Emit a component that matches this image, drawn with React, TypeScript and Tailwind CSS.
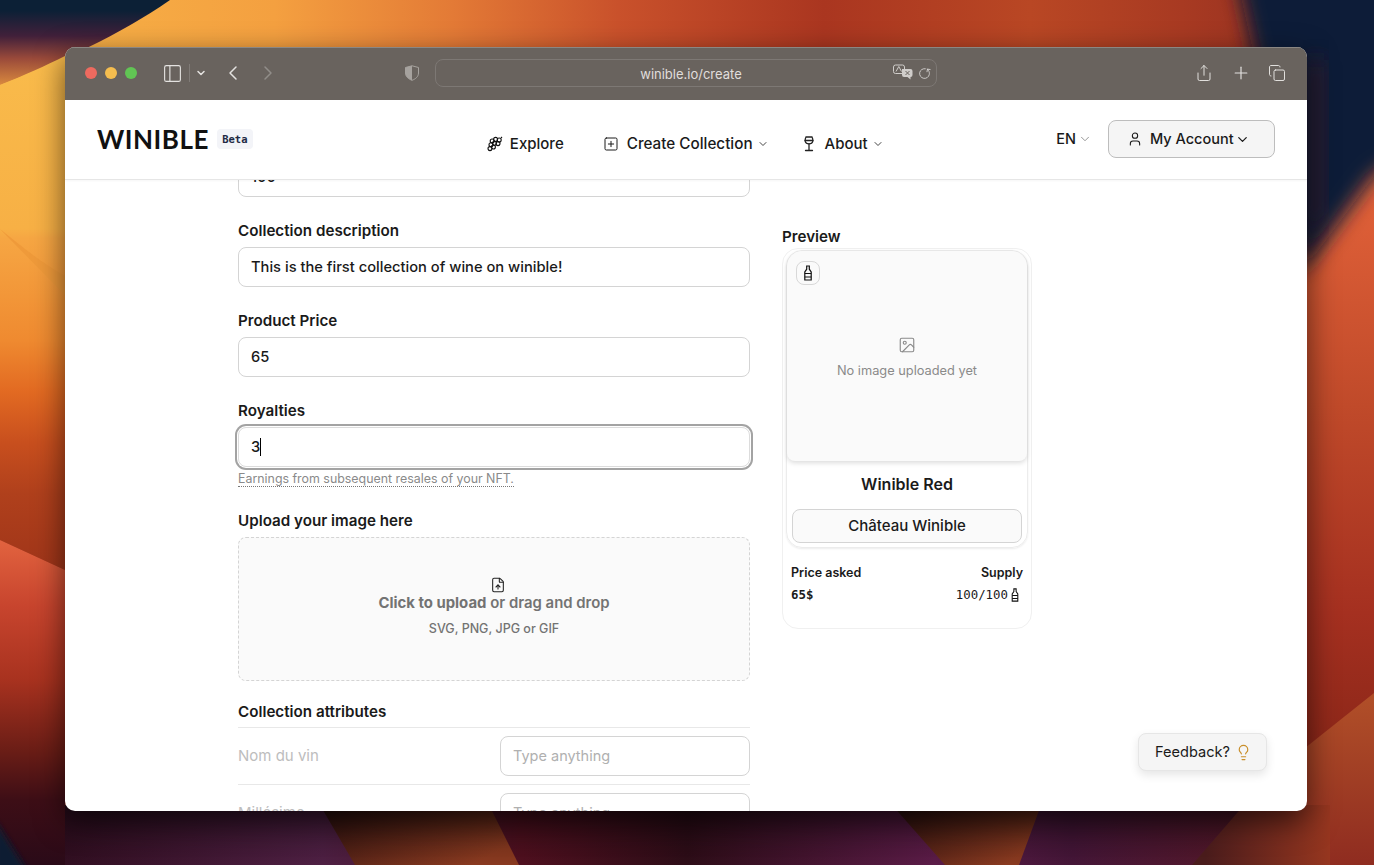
import React from "react";
import {
  ChevronDown,
  ChevronLeft,
  ChevronRight,
  Copy,
  FileUp,
  Image as ImageIcon,
  Lightbulb,
  PanelLeft,
  Plus,
  RotateCw,
  Share,
  SquarePlus,
  User,
} from "lucide-react";

const Wallpaper = () => (
  <svg className="absolute inset-0" width="1374" height="865" viewBox="0 0 1374 865">
    <defs>
      <linearGradient id="top" x1="0" y1="0" x2="1374" y2="0" gradientUnits="userSpaceOnUse">
        <stop offset="0" stopColor="#f8b548" />
        <stop offset="0.2" stopColor="#f4a040" />
        <stop offset="0.33" stopColor="#e37a36" />
        <stop offset="0.45" stopColor="#c9512b" />
        <stop offset="0.6" stopColor="#aa3620" />
        <stop offset="0.75" stopColor="#b94724" />
        <stop offset="0.86" stopColor="#a83a22" />
        <stop offset="1" stopColor="#8a2a20" />
      </linearGradient>
      <linearGradient id="sky" x1="0" y1="0" x2="0" y2="90" gradientUnits="userSpaceOnUse">
        <stop offset="0.12" stopColor="#0c2036" />
        <stop offset="0.4" stopColor="#41203a" />
        <stop offset="0.65" stopColor="#9a4a3a" />
        <stop offset="1" stopColor="#e5953f" />
      </linearGradient>
      <linearGradient id="left" x1="0" y1="60" x2="0" y2="570" gradientUnits="userSpaceOnUse">
        <stop offset="0" stopColor="#f9bb4b" />
        <stop offset="0.33" stopColor="#f7b045" />
        <stop offset="0.35" stopColor="#f6a643" />
        <stop offset="0.55" stopColor="#ef8a30" />
        <stop offset="0.65" stopColor="#e26a22" />
        <stop offset="0.75" stopColor="#c84f1e" />
        <stop offset="0.85" stopColor="#b0401c" />
        <stop offset="1" stopColor="#a03519" />
      </linearGradient>
      <linearGradient id="leftLow" x1="0" y1="540" x2="0" y2="865" gradientUnits="userSpaceOnUse">
        <stop offset="0" stopColor="#e2633f" />
        <stop offset="0.2" stopColor="#c8452e" />
        <stop offset="0.43" stopColor="#a8321f" />
        <stop offset="0.65" stopColor="#6a1d16" />
        <stop offset="0.8" stopColor="#3d0e16" />
        <stop offset="1" stopColor="#2a0a18" />
      </linearGradient>
      <linearGradient id="right" x1="0" y1="170" x2="0" y2="760" gradientUnits="userSpaceOnUse">
        <stop offset="0" stopColor="#e4633a" />
        <stop offset="0.4" stopColor="#c04a2a" />
        <stop offset="0.75" stopColor="#a53020" />
        <stop offset="1" stopColor="#8a2618" />
      </linearGradient>
      <linearGradient id="rightLow" x1="0" y1="700" x2="0" y2="865" gradientUnits="userSpaceOnUse">
        <stop offset="0" stopColor="#b04e28" />
        <stop offset="1" stopColor="#8f2c20" />
      </linearGradient>
      <linearGradient id="bottom" x1="0" y1="0" x2="1374" y2="0" gradientUnits="userSpaceOnUse">
        <stop offset="0" stopColor="#2a0a18" />
        <stop offset="0.235" stopColor="#4f2044" />
        <stop offset="0.38" stopColor="#50101f" />
        <stop offset="0.5" stopColor="#2e0d18" />
        <stop offset="0.68" stopColor="#5c1c48" />
        <stop offset="0.78" stopColor="#451638" />
        <stop offset="0.9" stopColor="#55182a" />
      </linearGradient>
      <linearGradient id="brown" x1="0" y1="0" x2="1" y2="0.6">
        <stop offset="0" stopColor="#2c100f" />
        <stop offset="1" stopColor="#8a3a20" />
      </linearGradient>
      <linearGradient id="corner" x1="1192" y1="0" x2="1330" y2="0" gradientUnits="userSpaceOnUse">
        <stop offset="0.1" stopColor="#4a1c1c" />
        <stop offset="1" stopColor="#96361f" />
      </linearGradient>
      <linearGradient id="dim" x1="0" y1="805" x2="0" y2="865" gradientUnits="userSpaceOnUse">
        <stop offset="0" stopColor="#000" stopOpacity="0.35" />
        <stop offset="1" stopColor="#000" stopOpacity="0" />
      </linearGradient>
      <filter id="soft" x="-20%" y="-20%" width="140%" height="140%">
        <feGaussianBlur stdDeviation="10" />
      </filter>
      <filter id="softer" x="-20%" y="-20%" width="140%" height="140%">
        <feGaussianBlur stdDeviation="3" />
      </filter>
    </defs>
    <rect width="1374" height="865" rx="12" fill="#8a2a18" />
    <rect x="0" y="0" width="1374" height="120" fill="url(#top)" />
    <rect x="1300" y="100" width="74" height="660" fill="url(#right)" />
    <path d="M1300 752L1374 693V865H1300Z" fill="url(#rightLow)" />
    <path d="M1235 -30H1400V160L1374 176 1300 275 1255 60Z" fill="#0b1f37" filter="url(#soft)" />
    <path d="M1307 60H1325V215L1307 245Z" fill="#3a1a2e" opacity="0.7" filter="url(#soft)" />
    <path d="M0 0H170C120 35 60 62 0 85Z" fill="url(#sky)" />
    <path d="M0 85C25 75 45 66 65 56V570L0 540Z" fill="url(#left)" />
    <path d="M0 229L65 295V276C40 262 20 245 0 229Z" fill="#ef9a3a" />
    <path d="M0 540L65 570V865H0Z" fill="url(#leftLow)" />
    <rect x="65" y="805" width="1240" height="60" fill="url(#bottom)" />
    <path d="M320 805L355 865H519L489 805Z" fill="url(#brown)" />
    <path d="M892 805L945 865H1019L1041 805Z" fill="url(#brown)" />
    <path d="M1244 805L1192 865H1330V805Z" fill="url(#corner)" />
    <path d="M65 805H1244L1192 865H65Z" fill="url(#dim)" />
    <path d="M-5 820L28 872H-5Z" fill="#0b1c30" filter="url(#softer)" />
  </svg>
);

const GrapeIcon = () => (
  <svg width="16" height="16" viewBox="0 0 16 16" fill="none" stroke="#111" strokeWidth="1.1">
    <circle cx="12.2" cy="4" r="2" />
    <circle cx="8.6" cy="3.4" r="2" />
    <circle cx="5.2" cy="5" r="2" />
    <circle cx="11" cy="7.6" r="2" />
    <circle cx="7.4" cy="7.2" r="2" />
    <circle cx="4" cy="8.8" r="2" />
    <circle cx="6.4" cy="11" r="2" />
    <circle cx="3" cy="12.6" r="2" />
    <path d="M14 2L15 1" />
  </svg>
);

const WineIcon = () => (
  <svg width="12" height="16" viewBox="0 0 12 16" fill="none" stroke="#222" strokeWidth="1.3" strokeLinecap="round">
    <path d="M3 1h6c.8 1.500 1.200 3 .8 4.400C9.400 7 8 7.800 6 7.800S2.600 7 2.200 5.400C1.800 4 2.200 2.500 3 1Z" />
    <path d="M2 4.500h8M6 8v6M2.500 14.500h7" />
  </svg>
);

const BottleIcon = ({ size = 16 }: { size?: number }) => (
  <svg width={size} height={size} viewBox="0 0 16 16" fill="none" stroke="#111" strokeWidth="1.2">
    <path d="M6.700 1h2.600v3.200l1.900 2.700V15H4.800V6.900l1.900-2.700Z" />
    <path d="M4.800 8.500h6.400M4.800 12h6.400" />
  </svg>
);

const ShieldIcon = () => (
  <svg width="14" height="16" viewBox="0 0 14 16">
    <path d="M7 .8 13.500 2.500V8c0 3.500-2.800 6-6.500 7.300C3.300 14 .5 11.500.5 8V2.500Z" fill="none" stroke="#a6a29e" strokeWidth="1" />
    <path d="M7 .8 .5 2.500V8c0 3.500 2.800 6 6.500 7.300Z" fill="#a6a29e" />
  </svg>
);

const TranslateIcon = () => (
  <svg width="20" height="16" viewBox="0 0 20 16">
    <rect x="0.500" y="1" width="11" height="8.500" rx="2" fill="none" stroke="#d0cdca" />
    <path d="M3 7.500 5.800 2.500 8.500 7.500" fill="none" stroke="#d0cdca" />
    <path d="M9 5h8.500a2 2 0 0 1 2 2v4a2 2 0 0 1-2 2v2.500L14.500 13H11a2 2 0 0 1-2-2Z" fill="#d0cdca" />
    <path d="M12.500 7l4 4M16.500 7l-4 4" stroke="#69635e" />
  </svg>
);

const Field = ({ label, value }: { label: string; value: string }) => (
  <div>
    <p className="text-[15.2px] leading-5 font-semibold text-[#1a1a1a] mb-[6px]">{label}</p>
    <input
      readOnly
      value={value}
      className="w-full h-10 px-3 rounded-lg border border-[#d4d4d4] bg-white text-[14.7px] font-medium text-[#1a1a1a] outline-none"
    />
  </div>
);

const AttributeRow = ({ label }: { label: string }) => (
  <div className="flex items-center justify-between py-2 border-b border-[#e8e8e8]">
    <span className="text-[15px] text-[#bdbdbd]">{label}</span>
    <input
      readOnly
      placeholder="Type anything"
      className="w-[250px] h-10 px-3 pb-px rounded-lg border border-[#d4d4d4] bg-white text-[14.5px] placeholder:text-[#b0b0b0] outline-none"
    />
  </div>
);

const App = () => {
  return (
    <div className="relative w-[1374px] h-[865px] overflow-hidden bg-white font-['Inter',sans-serif]">
      <Wallpaper />
      <div className="absolute left-[65px] top-[47px] w-[1242px] h-[764px] rounded-[10px] overflow-hidden flex flex-col bg-white shadow-[0_10px_30px_rgba(0,0,0,0.6)]">
        <div className="h-[53px] shrink-0 bg-[#69635e] border-t border-[#8b8783] flex items-center pl-5 pb-[2px] text-[#e4e2e0]">
          <span className="w-3 h-3 rounded-full bg-[#ee6a5f]" />
          <span className="w-3 h-3 rounded-full bg-[#f5bd4f] ml-2" />
          <span className="w-3 h-3 rounded-full bg-[#61c554] ml-2" />
          <PanelLeft size={21} strokeWidth={1.3} className="ml-[25px]" />
          <span className="w-px h-[18px] bg-[#807b77] ml-[6px]" />
          <ChevronDown size={12} strokeWidth={3} className="ml-[5px]" />
          <ChevronLeft size={24} strokeWidth={1.5} className="ml-[14px]" />
          <ChevronRight size={24} strokeWidth={1.5} className="ml-[11px] text-[#918d89]" />
          <div className="ml-[125px]"><ShieldIcon /></div>
          <div className="relative ml-4 w-[502px] h-7 pl-[10px] pt-[3px] rounded-lg border border-[#7d7874] flex items-center justify-center text-[13px] text-[#e0dedc]">
            winible.io/create
            <div className="absolute right-[23px] top-[4px]"><TranslateIcon /></div>
            <RotateCw size={13} strokeWidth={1.4} className="absolute right-[5px] top-[7px] -scale-x-100 rotate-[100deg]" />
          </div>
          <Share size={18} strokeWidth={1.3} className="ml-[258px]" />
          <Plus size={20} strokeWidth={1.4} className="ml-[18px]" />
          <Copy size={18} strokeWidth={1.3} className="ml-[17px]" />
        </div>

        <div className="relative z-10 h-[80px] shrink-0 bg-white border-b border-[#e6e6e6] shadow-[0_1px_2px_rgba(0,0,0,0.04)] flex items-center pl-8 pr-8">
          <div className="flex items-center -mt-[2px]">
            <span className="font-['Lato',sans-serif] font-bold text-[26px] leading-none tracking-[0.5px] text-[#111]">WINIBLE</span>
            <span className="ml-[8px] h-5 w-9 text-center rounded bg-[#f3f4f8] font-['DejaVu_Sans_Mono',monospace] font-bold text-[10.5px] leading-5 text-[#222a44]">Beta</span>
          </div>
          <div className="flex items-center ml-[234px] mt-[9px] text-[15px] font-medium text-[#1a1a1a]">
            <GrapeIcon />
            <span className="ml-[7px]">Explore</span>
            <SquarePlus size={16} strokeWidth={1.5} className="ml-[39px]" />
            <span className="ml-[8px] text-[15.25px]">Create Collection</span>
            <ChevronDown size={12} className="ml-[4px] text-[#444]" />
            <div className="ml-[34px]"><WineIcon /></div>
            <span className="ml-[10px]">About</span>
            <ChevronDown size={12} className="ml-[4px] text-[#444]" />
          </div>
          <div className="ml-auto flex items-center -mt-[1px]">
            <span className="text-[14.5px] font-medium text-[#1a1a1a]">EN</span>
            <ChevronDown size={14} strokeWidth={1.5} className="ml-[2px] text-[#888]" />
            <div className="ml-[16px] w-[167px] h-[38px] rounded-lg border border-[#bdbdbd] bg-[#f5f5f5] flex items-center pl-[18px] text-[14.5px] font-medium text-[#1a1a1a]">
              <User size={16} strokeWidth={1.6} />
              <span className="ml-[7px]">My Account</span>
              <ChevronDown size={15} strokeWidth={2} className="ml-[1px]" />
            </div>
          </div>
        </div>

        <div className="relative flex-1 overflow-hidden">
          <div className="flex items-start pl-[173px] -mt-[23px]">
            <div className="w-[512px] flex flex-col shrink-0">
              <input
                readOnly
                value="100"
                className="w-full h-10 px-3 rounded-lg border border-[#d4d4d4] bg-white text-[14.7px] font-medium text-[#1a1a1a] outline-none"
              />
              <div className="mt-6"><Field label="Collection description" value="This is the first collection of wine on winible!" /></div>
              <div className="mt-6"><Field label="Product Price" value="65" /></div>
              <div className="mt-6">
                <p className="text-[15.2px] leading-5 font-semibold text-[#1a1a1a] mb-[6px]">Royalties</p>
                <div className="w-full h-10 px-3 rounded-lg border border-[#dcdcdc] bg-white ring-2 ring-offset-1 ring-[#a3a3a3] flex items-center text-[14.7px] font-medium text-[#1a1a1a]">
                  3<span className="w-px h-[18px] bg-black" />
                </div>
                <p className="mt-1 text-[12.4px] leading-4 text-[#8a8a8a]">
                  <span className="border-b border-dotted border-[#777]">Earnings from subsequent resales of your NFT.</span>
                </p>
              </div>
              <div className="mt-6">
                <p className="text-[15.2px] leading-5 font-semibold text-[#1a1a1a] mb-[6px]">Upload your image here</p>
                <div className="h-[144px] rounded-lg border border-dashed border-[#d4d4d4] bg-[#fafafa] flex flex-col items-center pt-[39px]">
                  <FileUp size={16} strokeWidth={1.6} className="text-[#222] ml-2" />
                  <p className="text-[14.9px] leading-5 text-[#737373] font-semibold">
                    <span className="font-bold">Click to upload</span> or drag and drop
                  </p>
                  <p className="mt-[6px] text-[12.5px] leading-5 font-medium text-[#737373]">SVG, PNG, JPG or GIF</p>
                </div>
              </div>
              <p className="mt-[21px] text-[15.2px] leading-5 font-semibold text-[#1a1a1a] pb-[5px] border-b border-[#e8e8e8]">Collection attributes</p>
              <AttributeRow label="Nom du vin" />
              <AttributeRow label="Millésime" />
            </div>

            <div className="ml-8 w-[250px] mt-[70px] shrink-0">
              <p className="text-[15.2px] leading-5 font-semibold text-[#1a1a1a] mb-px">Preview</p>
              <div className="rounded-2xl border border-[#f0f0f0] bg-white pt-[1px] px-[3px] h-[381px]">
                <div className="rounded-2xl border border-[#ececec] shadow-[0_1px_2px_rgba(0,0,0,0.08)] pb-[4px]">
                  <div className="relative h-[210px] rounded-t-2xl rounded-b-lg bg-[#fafafa] shadow-[0_2px_5px_rgba(0,0,0,0.14)] flex flex-col items-center pt-[85px]">
                    <div className="absolute left-[9px] top-[10px] w-6 h-6 rounded-lg border border-[#d8d8d8] flex items-center justify-center">
                      <BottleIcon />
                    </div>
                    <ImageIcon size={18} strokeWidth={1.5} className="text-[#8a8a8a]" />
                    <p className="mt-[9px] text-[12.8px] leading-4 text-[#8a8a8a]">No image uploaded yet</p>
                  </div>
                  <p className="mt-[11px] text-center text-[16px] leading-6 font-semibold text-[#1a1a1a]">Winible Red</p>
                  <div className="mx-[5px] mt-[13px] h-[34px] rounded-lg border border-[#d4d4d4] bg-[#fafafa] flex items-center justify-center text-[15px] font-medium text-[#1a1a1a]">
                    Château Winible
                  </div>
                </div>
                <div className="flex justify-between px-[5px] mt-[17px] text-[12.5px] leading-4 font-semibold text-[#1a1a1a]">
                  <span>Price asked</span>
                  <span>Supply</span>
                </div>
                <div className="flex justify-between items-center pl-[5px] pr-[6px] mt-[6px] font-['DejaVu_Sans_Mono',monospace] text-[12.4px] leading-4 font-bold text-[#1a1a1a]">
                  <span>65$</span>
                  <span className="flex items-center font-normal">100/100<BottleIcon size={14} /></span>
                </div>
              </div>
            </div>
          </div>

          <div className="absolute right-[40px] bottom-[40px] w-[129px] h-[38px] pt-px rounded-lg border border-[#e6e6e6] bg-[#f5f5f5] shadow-[0_4px_10px_rgba(0,0,0,0.1)] flex items-center pl-4 text-[14.6px] text-[#1a1a1a]">
            Feedback?
            <Lightbulb size={17} strokeWidth={1.7} className="ml-[5px] text-[#c98f2b]" />
          </div>
        </div>
      </div>
    </div>
  );
};

export default App;
